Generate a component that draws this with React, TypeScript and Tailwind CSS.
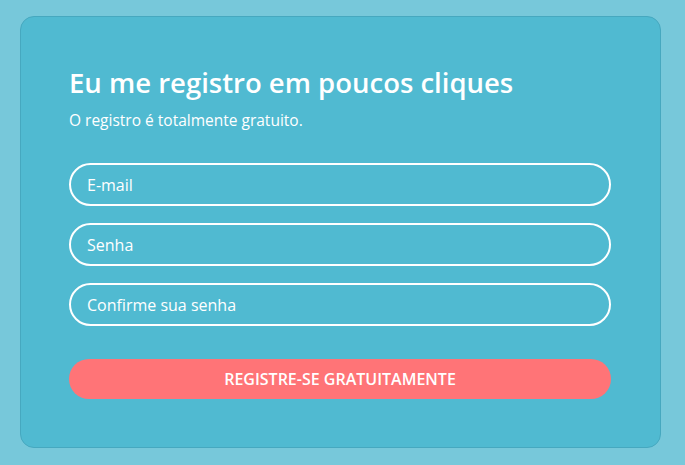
export default function App() {
  return (
    <div
      className="min-h-[465px] w-full bg-[#77c8da] pt-[16px] pl-[20px]"
      style={{ fontFamily: "'Open Sans', 'Noto Sans', sans-serif" }}
    >
      <div className="w-[641px] h-[432px] rounded-[14px] border border-[#46a8bf] bg-[#50bad1] px-[48px] pt-[48px] text-white">
        <h1 className="text-[27.5px] font-semibold leading-[36px]">Eu me registro em poucos cliques</h1>
        <p className="mt-[8px] text-[15.5px] leading-[22px]">O registro é totalmente gratuito.</p>
        <form className="mt-[32px] flex flex-col gap-[17px]" onSubmit={(e) => e.preventDefault()}>
          <input
            type="email"
            placeholder="E-mail"
            className="h-[43px] w-[542px] rounded-full border-2 border-white bg-transparent px-[16px] text-[16px] text-white placeholder:text-white outline-none"
          />
          <input
            type="password"
            placeholder="Senha"
            className="h-[43px] w-[542px] rounded-full border-2 border-white bg-transparent px-[16px] text-[16px] text-white placeholder:text-white outline-none"
          />
          <input
            type="password"
            placeholder="Confirme sua senha"
            className="h-[43px] w-[542px] rounded-full border-2 border-white bg-transparent px-[16px] text-[16px] text-white placeholder:text-white outline-none"
          />
          <button
            type="submit"
            className="mt-[16px] h-[40px] w-[542px] rounded-full bg-[#ff7477] text-[16px] font-semibold uppercase text-white"
          >
            Registre-se gratuitamente
          </button>
        </form>
      </div>
    </div>
  );
}
